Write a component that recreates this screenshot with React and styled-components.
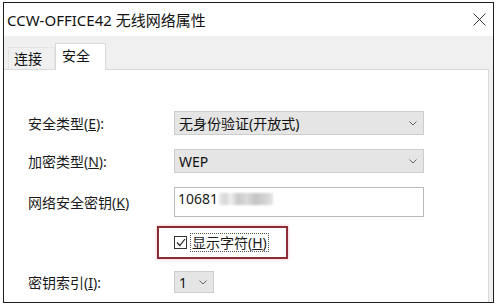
import React from "react";
import styled, { createGlobalStyle } from "styled-components";

const GlobalStyle = createGlobalStyle`
  html, body {
    margin: 0;
    padding: 0;
    background: #ffffff;
  }
  body {
    font-family: "Noto Sans", "Noto Sans CJK SC", sans-serif;
    color: #1a1a1a;
  }
`;

//window frame
const Window = styled.div`
  margin: 2px 0 0 3px;
  width: 491px;
  height: 301px;
  box-sizing: border-box;
  border: 1px solid #1e1e1e;
  display: flex;
  flex-direction: column;
  overflow: hidden;
  background: #f0f0f0;
`;

const TitleBar = styled.div`
  height: 33px;
  flex: none;
  background: #ffffff;
  display: flex;
  align-items: center;
  justify-content: space-between;
  padding: 0 7px 0 3px;
  font-size: 15px;
  color: #111;
`;

const CloseIcon = () => (
  <svg width="13" height="13" viewBox="0 0 13 13">
    <path d="M0.5 0.5 L12.5 12.5 M12.5 0.5 L0.5 12.5" stroke="#333" strokeWidth="1" />
  </svg>
);

const Body = styled.div`
  flex: 1;
  display: flex;
  flex-direction: column;
  padding-right: 4px;
`;

//tabs
const TabRow = styled.div`
  height: 33px;
  flex: none;
  display: flex;
  align-items: flex-end;
  padding-left: 4px;
  position: relative;
  z-index: 1;
`;

const Tab = styled.div`
  box-sizing: border-box;
  height: ${(p) => (p.$active ? "27px" : "22px")};
  width: ${(p) => (p.$active ? "51px" : "47px")};
  margin-bottom: ${(p) => (p.$active ? "-1px" : "0")};
  padding: ${(p) => (p.$active ? "3px 0 0 6px" : "2px 0 0 5px")};
  background: ${(p) => (p.$active ? "#ffffff" : "#f0f0f0")};
  border: 1px solid ${(p) => (p.$active ? "#d9d9d9" : "#e4e4e4")};
  border-bottom: none;
  font-size: 14px;
  line-height: 18px;
  color: #111;
`;

const Panel = styled.div`
  flex: 1;
  background: #ffffff;
  border-top: 1px solid #d9d9d9;
  border-right: 1px solid #d9d9d9;
  padding: 41px 0 0 24px;
`;

const Row = styled.div`
  display: flex;
  align-items: center;
  margin-top: ${(p) => p.$top || 0}px;
`;

const Label = styled.div`
  width: 146px;
  flex: none;
  font-size: 14px;
  color: #1a1a1a;
  u {
    text-decoration: underline;
  }
`;

const Select = styled.div`
  box-sizing: border-box;
  width: ${(p) => p.$w}px;
  height: ${(p) => p.$h}px;
  background: #e5e5e5;
  border: 1px solid #cdcdcd;
  display: flex;
  align-items: center;
  justify-content: space-between;
  padding: 0 6px 0 4px;
  font-size: 14px;
  color: #111;
`;

const Chevron = () => (
  <svg width="8" height="5" viewBox="0 0 8 5">
    <path d="M0.5 0.5 L4 4 L7.5 0.5" fill="none" stroke="#666" strokeWidth="1" />
  </svg>
);

const KeyInput = styled.div`
  box-sizing: border-box;
  width: 250px;
  height: 30px;
  background: #ffffff;
  border: 1px solid #b9b9b9;
  padding: 2px 0 0 3px;
  font-size: 14px;
  line-height: 18px;
  display: flex;
  align-items: flex-start;
`;

const Blur = styled.span`
  display: inline-block;
  width: 54px;
  height: 12px;
  margin: 3px 0 0 1px;
  background: linear-gradient(
    90deg,
    #e9e9e9 0%,
    #d6d6d6 12%,
    #f0f0f0 22%,
    #c9c9c9 35%,
    #dadada 52%,
    #c4c4c4 68%,
    #d2d2d2 85%,
    #e6e6e6 100%
  );
  filter: blur(0.8px);
`;

const Highlight = styled.div`
  box-sizing: border-box;
  width: 131px;
  height: 33px;
  margin-left: 129px;
  border: 2px solid #8c2c34;
  box-shadow: 0 0 3px #f0b8bf;
  display: flex;
  align-items: center;
  padding-left: 15px;
  gap: 3px;
`;

const Box = styled.div`
  width: 11px;
  height: 11px;
  border: 1px solid #333;
  display: flex;
  align-items: center;
  justify-content: center;
`;

const CheckText = styled.span`
  font-size: 14px;
  line-height: 17px;
  padding: 0 1px;
  border: 1px dotted #555;
  color: #1a1a1a;
`;

const App = () => {
  return (
    <>
      <GlobalStyle />
      <Window>
        <TitleBar>
          <span>CCW-OFFICE42 无线网络属性</span>
          <CloseIcon />
        </TitleBar>
        <Body>
          <TabRow>
            <Tab>连接</Tab>
            <Tab $active>安全</Tab>
          </TabRow>
          <Panel>
            <Row>
              <Label>
                安全类型(<u>E</u>):
              </Label>
              <Select $w={250} $h={24}>
                <span>无身份验证(开放式)</span>
                <Chevron />
              </Select>
            </Row>
            <Row $top={14}>
              <Label>
                加密类型(<u>N</u>):
              </Label>
              <Select $w={250} $h={24}>
                <span>WEP</span>
                <Chevron />
              </Select>
            </Row>
            <Row $top={14}>
              <Label>
                网络安全密钥(<u>K</u>)
              </Label>
              <KeyInput>
                <span>10681</span>
                <Blur />
              </KeyInput>
            </Row>
            <Row $top={9}>
              <Highlight>
                <Box>
                  <svg width="10" height="9" viewBox="0 0 10 9">
                    <path d="M1 4.5 L3.8 7.5 L9 1" fill="none" stroke="#222" strokeWidth="1.2" />
                  </svg>
                </Box>
                <CheckText>
                  显示字符(<u>H</u>)
                </CheckText>
              </Highlight>
            </Row>
            <Row $top={12}>
              <Label>
                密钥索引(<u>I</u>):
              </Label>
              <Select $w={40} $h={22}>
                <span>1</span>
                <Chevron />
              </Select>
            </Row>
          </Panel>
        </Body>
      </Window>
    </>
  );
};

export default App;
